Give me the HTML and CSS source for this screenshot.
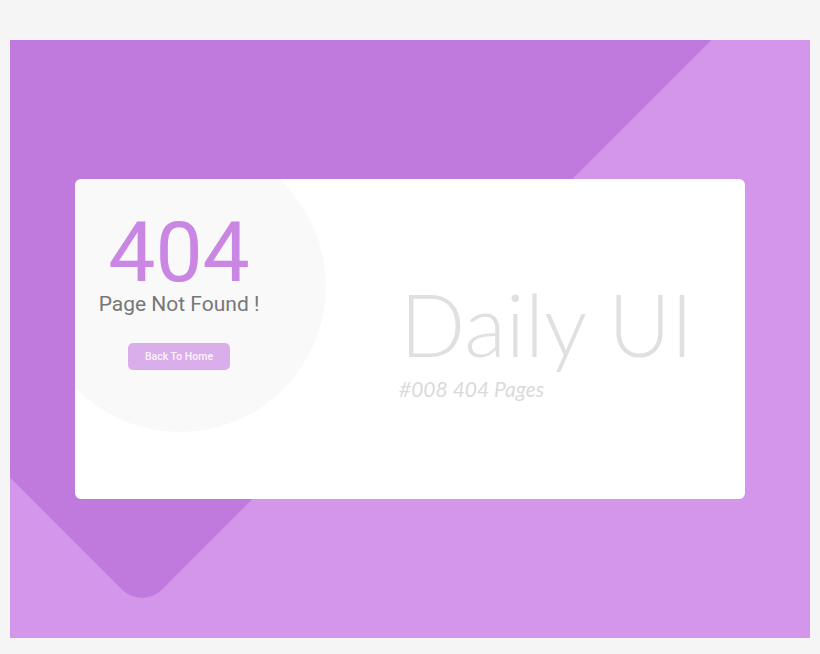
FILE: index.html
```html
<!DOCTYPE html>
<html lang="en">
<head>
<meta charset="utf-8">
<title>404 Page Not Found</title>
<link rel="stylesheet" href="styles.css">
</head>
<body>
<main class="stage">
  <div class="diamond"></div>
  <section class="card">
    <div class="blob"></div>
    <div class="error">
      <h1 class="code">404</h1>
      <p class="message">Page Not Found !</p>
      <a class="home-btn" href="#">Back To Home</a>
    </div>
    <div class="brand">
      <h2 class="brand-title">Daily UI</h2>
      <p class="brand-sub">#008 404 Pages</p>
    </div>
  </section>
</main>
</body>
</html>
```

FILE: styles.css
```css
html, body {
  margin: 0;
  padding: 0;
}
body {
  background: #f5f5f5;
  width: 820px;
  height: 654px;
  padding-top: 40px;
  box-sizing: border-box;
}
.stage {
  position: relative;
  overflow: hidden;
  margin: 0 10px;
  width: 800px;
  height: 598px;
  background: #d496eb;
  padding-top: 139px;
  padding-left: 65px;
  box-sizing: border-box;
}
.diamond {
  position: absolute;
  width: 1200px;
  height: 1200px;
  left: -468px;
  top: -879px;
  background: #c07ade;
  border-radius: 28px;
  transform: rotate(45deg);
}
.card {
  position: relative;
  z-index: 1;
  width: 670px;
  height: 320px;
  background: #ffffff;
  border-radius: 6px;
  overflow: hidden;
  display: flex;
}
.blob {
  position: absolute;
  left: -41px;
  top: -39px;
  width: 292px;
  height: 292px;
  border-radius: 50%;
  background: #f9f9f9;
}
.error {
  position: relative;
  width: 208px;
  display: flex;
  flex-direction: column;
  align-items: center;
  padding-top: 36px;
  font-family: Roboto, "Liberation Sans", sans-serif;
}
.code {
  margin: 0;
  font-size: 84px;
  line-height: 76px;
  font-weight: 400;
  color: #c986e2;
}
.message {
  margin: 1px 0 0;
  font-size: 21px;
  line-height: 24px;
  color: #777777;
}
.home-btn {
  margin-top: 27px;
  width: 102px;
  height: 27px;
  border-radius: 5px;
  background: #daaeea;
  color: #fbf4fd;
  font-size: 10.5px;
  font-weight: 500;
  line-height: 27px;
  text-align: center;
  text-decoration: none;
}
.brand {
  position: relative;
  padding-left: 117px;
  padding-top: 102px;
  font-family: Lato, "Open Sans", sans-serif;
}
.brand-title {
  margin: 0;
  font-size: 86px;
  line-height: 85px;
  font-weight: 300;
  color: #e0e0e0;
  white-space: nowrap;
}
.brand-sub {
  margin: 11px 0 0 -1px;
  font-size: 21px;
  line-height: 24px;
  font-style: italic;
  font-weight: 400;
  color: #dadada;
}
```
